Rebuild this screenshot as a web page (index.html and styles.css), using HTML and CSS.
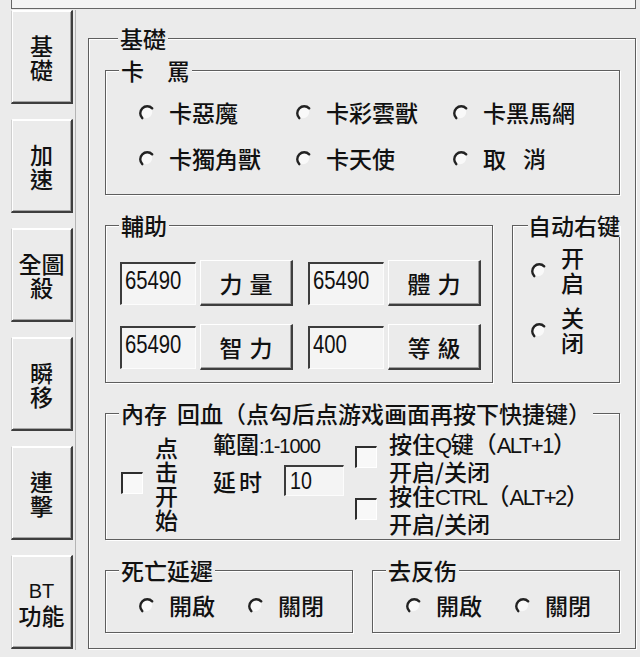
FILE: index.html
```html
<!DOCTYPE html>
<html lang="zh-Hant">
<head>
<meta charset="utf-8">
<title>基礎</title>
<link rel="stylesheet" href="styles.css">
</head>
<body>
<svg class="defs" aria-hidden="true">
  <defs>
    <symbol id="rad" viewBox="0 0 16 16">
      <circle cx="8" cy="8" r="6.2" fill="#f9f9f9"/>
      <path d="M4.3 14.2 A7 7 0 1 1 14.2 4.3" fill="none" stroke="#222" stroke-width="2.4" stroke-linecap="round"/>
    </symbol>
  </defs>
</svg>
<div class="topbar"></div>
<div class="main">
  <nav class="tabs">
    <div class="tab"><span class="tab-t">基<br>礎</span></div>
    <div class="tab"><span class="tab-t">加<br>速</span></div>
    <div class="tab"><span class="tab-t">全圖<br>殺</span></div>
    <div class="tab"><span class="tab-t">瞬<br>移</span></div>
    <div class="tab"><span class="tab-t">連<br>擊</span></div>
    <div class="tab"><span class="tab-t"><span class="lat-bt">BT</span><br>功能</span></div>
  </nav>
  <section class="page">
    <div class="grp grp-main">
      <div class="lg">基礎</div>

      <div class="grp grp-ka">
        <div class="lg">卡<i class="sp sp-w"></i>罵</div>
        <div class="radios">
          <label class="rd"><svg class="ri"><use href="#rad"/></svg><span>卡惡魔</span></label>
          <label class="rd"><svg class="ri"><use href="#rad"/></svg><span>卡彩雲獸</span></label>
          <label class="rd"><svg class="ri"><use href="#rad"/></svg><span>卡黑馬網</span></label>
          <label class="rd"><svg class="ri"><use href="#rad"/></svg><span>卡獨角獸</span></label>
          <label class="rd"><svg class="ri"><use href="#rad"/></svg><span>卡天使</span></label>
          <label class="rd"><svg class="ri"><use href="#rad"/></svg><span>取<i class="sp sp-m"></i>消</span></label>
        </div>
      </div>

      <div class="row-mid">
        <div class="grp grp-fz">
          <div class="lg">輔助</div>
          <div class="fz-rows">
            <div class="fz-row">
              <div class="ed"><span class="num">65490</span></div>
              <div class="btn"><span>力<i class="sp sp-s"></i>量</span></div>
              <div class="ed ed-2"><span class="num">65490</span></div>
              <div class="btn"><span>體<i class="sp sp-s"></i>力</span></div>
            </div>
            <div class="fz-row">
              <div class="ed"><span class="num">65490</span></div>
              <div class="btn"><span>智<i class="sp sp-s"></i>力</span></div>
              <div class="ed ed-2"><span class="num">400</span></div>
              <div class="btn"><span>等<i class="sp sp-s"></i>級</span></div>
            </div>
          </div>
        </div>
        <div class="grp grp-auto">
          <div class="lg lg-auto">自动右键</div>
          <div class="auto-list">
            <label class="auto-item"><svg class="ri"><use href="#rad"/></svg><span class="vtext">开<br>启</span></label>
            <label class="auto-item"><svg class="ri"><use href="#rad"/></svg><span class="vtext">关<br>闭</span></label>
          </div>
        </div>
      </div>

      <div class="grp grp-mem">
        <div class="lg">內存<i class="sp sp-n"></i>回血（点勾后点游戏画面再按下快捷键）</div>
        <div class="mem-body">
          <label class="mem-start"><span class="cb"></span><span class="vtext4">点<br>击<br>开<br>始</span></label>
          <div class="mem-mid">
            <div class="range">範圍<span class="lat-s">:1-1000</span></div>
            <div class="delay"><span class="delay-lb">延时</span><div class="ed ed-sm"><span class="num">10</span></div></div>
          </div>
          <div class="mem-right">
            <label class="hk"><span class="cb"></span><span class="hk-text">按住<span class="lat">Q</span>键（<span class="lat">ALT+1</span>）<br>开启/关闭</span></label>
            <label class="hk"><span class="cb"></span><span class="hk-text">按住<span class="lat">CTRL</span>（<span class="lat">ALT+2</span>）<br>开启/关闭</span></label>
          </div>
        </div>
      </div>

      <div class="row-bot">
        <div class="grp grp-small">
          <div class="lg">死亡延遲</div>
          <div class="rrow">
            <label class="rd"><svg class="ri"><use href="#rad"/></svg><span>開啟</span></label>
            <label class="rd"><svg class="ri"><use href="#rad"/></svg><span>關閉</span></label>
          </div>
        </div>
        <div class="grp grp-small">
          <div class="lg">去反伤</div>
          <div class="rrow">
            <label class="rd"><svg class="ri"><use href="#rad"/></svg><span>開啟</span></label>
            <label class="rd"><svg class="ri"><use href="#rad"/></svg><span>關閉</span></label>
          </div>
        </div>
      </div>
    </div>
  </section>
</div>
</body>
</html>
```

FILE: styles.css
```css
* { box-sizing: border-box; }
html, body { margin: 0; padding: 0; }
body {
  width: 640px;
  height: 657px;
  overflow: hidden;
  background: #ebebeb;
  color: #111;
  font-family: "Noto Sans CJK TC", "Noto Sans CJK SC", sans-serif;
  font-size: 23px;
  font-weight: 500;
  line-height: 24px;
}
.defs { display: block; width: 0; height: 0; overflow: hidden; }

.topbar {
  margin-left: 11px;
  width: 625px;
  height: 9px;
  border: 1px solid #666;
  border-top: 0;
  background: #f4f4f4;
}

.main { display: flex; padding-top: 1px; }

.tabs {
  margin-left: 11px;
  width: 62px;
  display: flex;
  flex-direction: column;
  gap: 15px;
}
.tab {
  height: 94px;
  display: flex;
  align-items: center;
  justify-content: center;
  text-align: center;
  border-top: 1px solid #fff;
  border-left: 1px solid #cfcfcf;
  border-right: 2px solid #3e3e3e;
  border-bottom: 2px solid #3e3e3e;
  box-shadow: inset 1px 1px 0 #fff, inset -1px -1px 0 #a5a5a5;
}
.tab-t { display: block; line-height: 24px; }
.lat-bt {
  font-family: "Liberation Sans", sans-serif;
  font-size: 20px;
}

.page {
  margin-left: 2px;
  width: 563px;
  height: 640px;
  border-left: 1px solid #b4b4b4;
  padding: 28px 0 0 12px;
}

.grp {
  border: 1px solid #5e5e5e;
  box-shadow: inset 1px 1px 0 #fff, 1px 1px 0 #fff;
}
.lg {
  display: table;
  margin: -13px 0 0 13px;
  padding: 0 2px;
  background: #ebebeb;
  white-space: nowrap;
  line-height: 24px;
}
.lg-auto { margin-left: 15px; padding: 0; }

.sp { display: inline-block; }
.sp-w { width: 23px; }
.sp-m { width: 17px; }
.sp-s { width: 7px; }
.sp-n { width: 10px; }

.grp-main {
  width: 548px;
  height: 611px;
  padding: 0 15px 0 16px;
}

.ri { width: 16px; height: 16px; flex: none; }
.rd {
  display: flex;
  align-items: center;
  gap: 15px;
  height: 24px;
  white-space: nowrap;
}

.grp-ka { margin-top: 20px; height: 125px; }
.radios {
  display: grid;
  grid-template-columns: 157px 157px 157px;
  row-gap: 22px;
  padding: 18px 0 0 32px;
}

.row-mid {
  margin-top: 30px;
  display: flex;
  gap: 19px;
  height: 158px;
}
.grp-fz { width: 388px; }
.grp-auto { width: 108px; }

.fz-rows {
  display: flex;
  flex-direction: column;
  gap: 18px;
  padding: 23px 0 0 14px;
}
.fz-row { display: flex; align-items: center; height: 46px; }
.btn {
  width: 93px;
  height: 46px;
  margin-left: 4px;
  display: flex;
  align-items: center;
  justify-content: center;
  white-space: nowrap;
  border-top: 1px solid #fff;
  border-left: 1px solid #fff;
  border-right: 2px solid #3e3e3e;
  border-bottom: 2px solid #3e3e3e;
  box-shadow: inset -1px -1px 0 #a0a0a0;
}
.ed {
  width: 76px;
  height: 43px;
  border-top: 2px solid #3c3c3c;
  border-left: 2px solid #3c3c3c;
  border-right: 1px solid #fcfcfc;
  border-bottom: 1px solid #fcfcfc;
  background: #f4f4f4;
  padding: 3px 0 0 3px;
  overflow: hidden;
  white-space: nowrap;
}
.ed-2 { margin-left: 15px; }
.num {
  display: inline-block;
  font-family: "Liberation Sans", sans-serif;
  font-weight: 400;
  font-size: 26px;
  line-height: 26px;
  transform: scaleX(0.78);
  transform-origin: 0 0;
}

.auto-list {
  display: flex;
  flex-direction: column;
  gap: 10px;
  padding: 8px 0 0 17px;
}
.auto-item { display: flex; align-items: center; gap: 15px; }
.vtext { display: block; line-height: 25px; }

.grp-mem { margin-top: 30px; height: 127px; }
.mem-body { display: flex; padding: 6px 0 0 15px; }
.mem-start { display: flex; align-items: center; gap: 12px; }
.cb {
  width: 22px;
  height: 22px;
  flex: none;
  border-top: 2px solid #2e2e2e;
  border-left: 2px solid #2e2e2e;
  border-right: 1px solid #fff;
  border-bottom: 1px solid #fff;
  background: #f8f8f8;
}
.vtext4 { display: block; line-height: 24px; }
.mem-mid { margin-left: 35px; width: 142px; }
.range { white-space: nowrap; line-height: 24px; }
.lat-s {
  font-family: "Liberation Sans", sans-serif;
  font-weight: 400;
  font-size: 20px;
  letter-spacing: -1px;
}
.delay { display: flex; align-items: center; gap: 19px; margin-top: 7px; }
.delay-lb { letter-spacing: 3px; white-space: nowrap; }
.ed-sm { width: 60px; height: 31px; padding: 0 0 0 4px; }
.ed-sm .num { font-size: 24px; line-height: 28px; transform: scaleX(0.82); }

.mem-right { display: flex; flex-direction: column; }
.hk { display: flex; align-items: center; gap: 12px; }
.hk-text { display: block; line-height: 24.5px; white-space: nowrap; }
.lat {
  font-family: "Liberation Sans", sans-serif;
  font-weight: 400;
  font-size: 22px;
  letter-spacing: -1.5px;
}

.row-bot {
  margin-top: 30px;
  display: flex;
  gap: 19px;
}
.grp-small { width: 248px; height: 63px; }
.rrow {
  display: flex;
  gap: 32px;
  padding: 11px 0 0 32px;
}
```
